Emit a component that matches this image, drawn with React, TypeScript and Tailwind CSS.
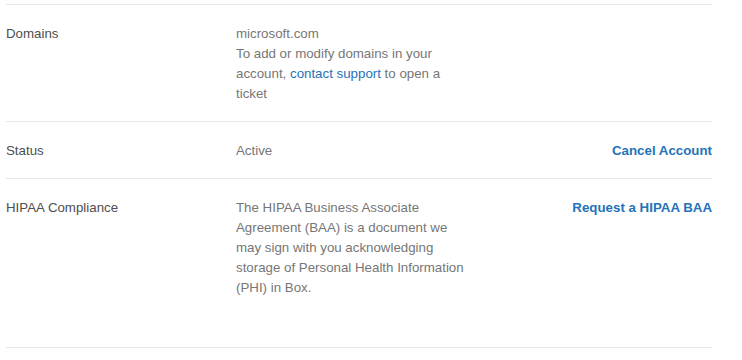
const rows = [
  {
    label: "Domains",
    value: (
      <>
        microsoft.com
        <br />
        To add or modify domains in your account,{" "}
        <a href="#" className="text-[#2473b8]">
          contact support
        </a>{" "}
        to open a ticket
      </>
    ),
    action: null as string | null,
    pad: "pb-[17px]",
  },
  { label: "Status", value: <>Active</>, action: "Cancel Account", pad: "pb-[17px]" },
  {
    label: "HIPAA Compliance",
    value: (
      <>
        The HIPAA Business Associate Agreement (BAA) is a document we may sign with you acknowledging storage of
        Personal Health Information (PHI) in Box.
      </>
    ),
    action: "Request a HIPAA BAA",
    pad: "pb-[49px]",
  },
];

export default function App() {
  return (
    <div className="bg-white w-[742px] h-[360px] pt-1 pl-[6px] pr-[30px] font-['Liberation_Sans',Arial,sans-serif] text-[13.3px] leading-5">
      <div className="border-t border-[#e8e8e8]">
        {rows.map((r) => (
          <div key={r.label} className={`flex pt-[19px] ${r.pad} border-b border-[#e8e8e8]`}>
            <div className="w-[230px] shrink-0 text-[#4e4e4e]">{r.label}</div>
            <div className="w-[232px] shrink-0 text-[#767676]">{r.value}</div>
            <div className="flex-1 text-right">
              {r.action && (
                <a href="#" className="font-bold text-[#2473b8]">
                  {r.action}
                </a>
              )}
            </div>
          </div>
        ))}
      </div>
    </div>
  );
}
